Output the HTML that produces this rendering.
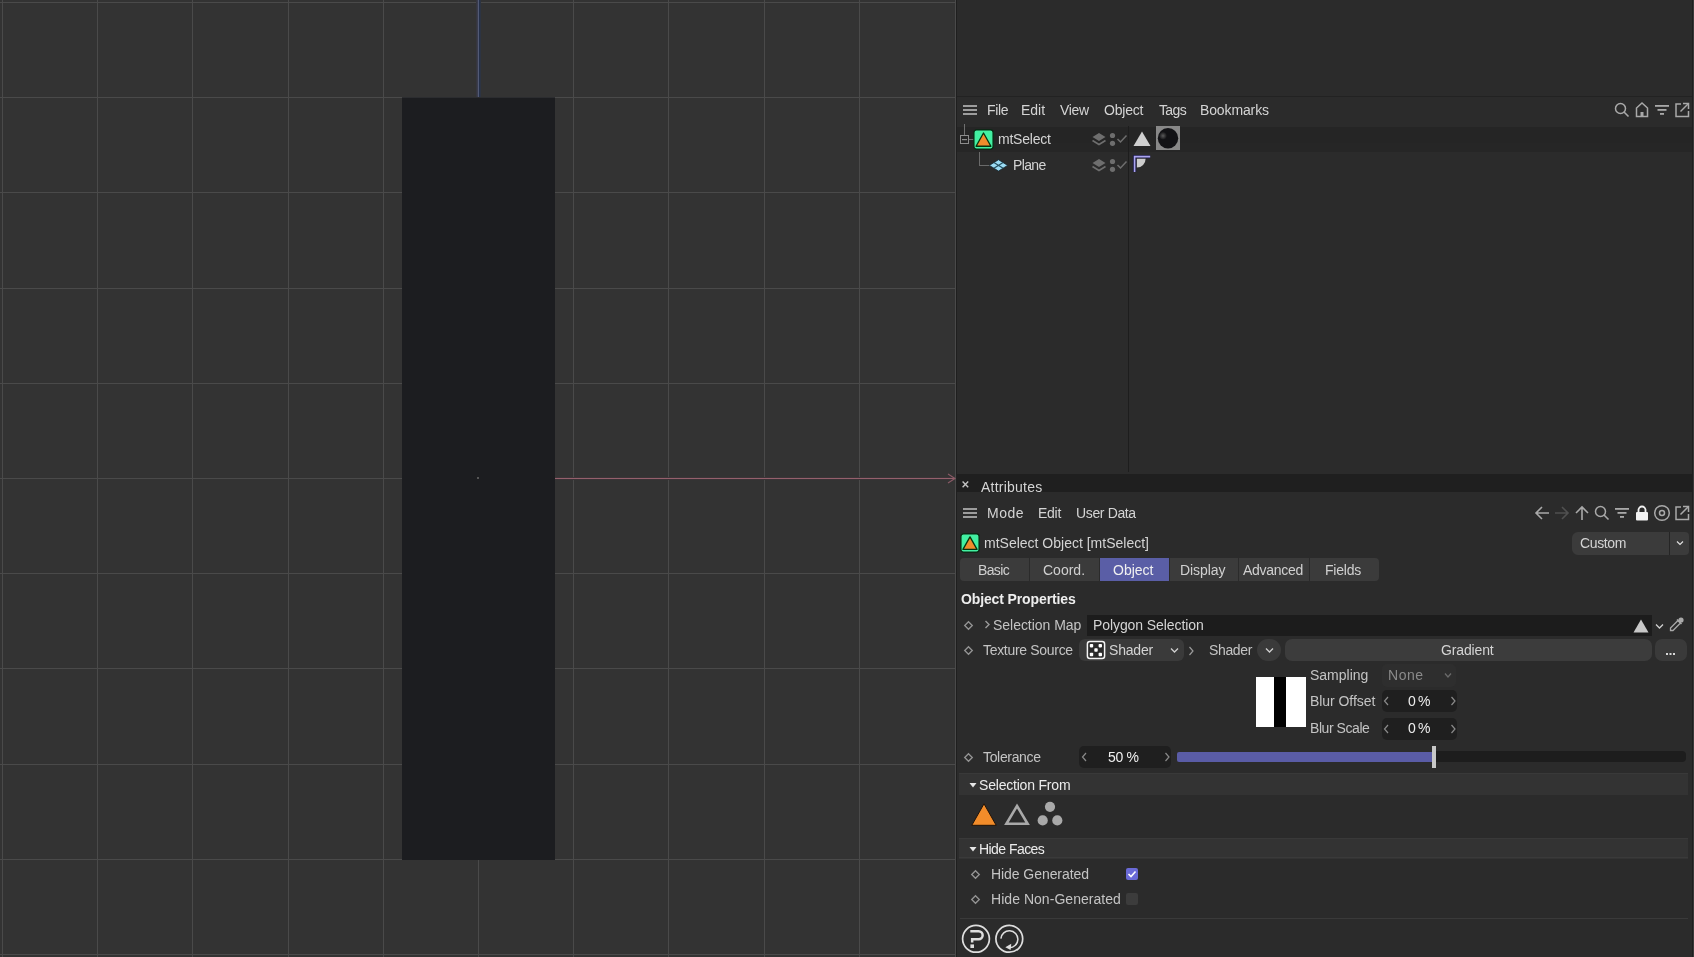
<!DOCTYPE html>
<html><head><meta charset="utf-8"><style>
html,body{margin:0;padding:0;width:1694px;height:957px;overflow:hidden;background:#2b2b2b;}
body{position:relative;font-family:"Liberation Sans",sans-serif;}
.t{position:absolute;white-space:nowrap;will-change:transform;}
svg{overflow:visible;}
</style></head><body>
<div style="position:absolute;left:0px;top:0px;width:956px;height:957px;background:#333333;"></div>
<div style="position:absolute;left:2px;top:0px;width:1px;height:957px;background:#4a4a4a;"></div>
<div style="position:absolute;left:97px;top:0px;width:1px;height:957px;background:#4a4a4a;"></div>
<div style="position:absolute;left:192px;top:0px;width:1px;height:957px;background:#4a4a4a;"></div>
<div style="position:absolute;left:288px;top:0px;width:1px;height:957px;background:#4a4a4a;"></div>
<div style="position:absolute;left:383px;top:0px;width:1px;height:957px;background:#4a4a4a;"></div>
<div style="position:absolute;left:478px;top:0px;width:1px;height:957px;background:#4a4a4a;"></div>
<div style="position:absolute;left:573px;top:0px;width:1px;height:957px;background:#4a4a4a;"></div>
<div style="position:absolute;left:668px;top:0px;width:1px;height:957px;background:#4a4a4a;"></div>
<div style="position:absolute;left:764px;top:0px;width:1px;height:957px;background:#4a4a4a;"></div>
<div style="position:absolute;left:859px;top:0px;width:1px;height:957px;background:#4a4a4a;"></div>
<div style="position:absolute;left:955px;top:0px;width:1px;height:957px;background:#4a4a4a;"></div>
<div style="position:absolute;left:0px;top:2px;width:956px;height:1px;background:#4a4a4a;"></div>
<div style="position:absolute;left:0px;top:97px;width:956px;height:1px;background:#4a4a4a;"></div>
<div style="position:absolute;left:0px;top:192px;width:956px;height:1px;background:#4a4a4a;"></div>
<div style="position:absolute;left:0px;top:288px;width:956px;height:1px;background:#4a4a4a;"></div>
<div style="position:absolute;left:0px;top:383px;width:956px;height:1px;background:#4a4a4a;"></div>
<div style="position:absolute;left:0px;top:478px;width:956px;height:1px;background:#4a4a4a;"></div>
<div style="position:absolute;left:0px;top:573px;width:956px;height:1px;background:#4a4a4a;"></div>
<div style="position:absolute;left:0px;top:668px;width:956px;height:1px;background:#4a4a4a;"></div>
<div style="position:absolute;left:0px;top:764px;width:956px;height:1px;background:#4a4a4a;"></div>
<div style="position:absolute;left:0px;top:859px;width:956px;height:1px;background:#4a4a4a;"></div>
<div style="position:absolute;left:0px;top:954px;width:956px;height:1px;background:#4a4a4a;"></div>
<div style="position:absolute;left:476px;top:0px;width:1px;height:97px;background:#36363f;"></div>
<div style="position:absolute;left:477px;top:0px;width:1px;height:97px;background:#3a3c4c;"></div>
<div style="position:absolute;left:478px;top:0px;width:1px;height:97px;background:#525a76;"></div>
<div style="position:absolute;left:479px;top:0px;width:1px;height:97px;background:#25304a;"></div>
<div style="position:absolute;left:480px;top:0px;width:1px;height:97px;background:#2d3442;"></div>
<div style="position:absolute;left:402px;top:98px;width:153px;height:762px;background:#1c1d20;"></div>
<div style="position:absolute;left:402px;top:97px;width:153px;height:1px;background:#2c2d30;"></div>
<div style="position:absolute;left:555px;top:478px;width:400px;height:1px;background:#94606c;"></div>
<div style="position:absolute;left:555px;top:477px;width:400px;height:1px;background:#3c3538;"></div>
<div style="position:absolute;left:555px;top:479px;width:400px;height:1px;background:#3a3336;"></div>
<svg style="position:absolute;left:944px;top:471px;" width="12" height="15" viewBox="0 0 12 15"><path d="M4 3 L11 7.5 L4 12" fill="none" stroke="#8a5a66" stroke-width="1.1"/></svg>
<div style="position:absolute;left:477px;top:477px;width:2px;height:2px;background:#555;"></div>
<div style="position:absolute;left:956px;top:0px;width:738px;height:957px;background:#2b2b2b;"></div>
<div style="position:absolute;left:956px;top:0px;width:1px;height:957px;background:#1f1f1f;"></div>
<div style="position:absolute;left:1692px;top:0px;width:1px;height:957px;background:#1f1f1f;"></div>
<div style="position:absolute;left:1693px;top:0px;width:1px;height:957px;background:#3a3a3a;"></div>
<div style="position:absolute;left:957px;top:96px;width:735px;height:1px;background:#222222;"></div>
<div style="position:absolute;left:963px;top:105px;width:14px;height:2px;background:#9c9c9c;"></div>
<div style="position:absolute;left:963px;top:109px;width:14px;height:2px;background:#9c9c9c;"></div>
<div style="position:absolute;left:963px;top:113px;width:14px;height:2px;background:#9c9c9c;"></div>
<div class="t" style="left:986.60px;top:100px;font-size:14px;line-height:20px;letter-spacing:-0.3px;color:#d4d4d4;font-weight:normal;">File</div>
<div class="t" style="left:1021.00px;top:100px;font-size:14px;line-height:20px;letter-spacing:0.0px;color:#d4d4d4;font-weight:normal;">Edit</div>
<div class="t" style="left:1059.50px;top:100px;font-size:14px;line-height:20px;letter-spacing:-0.333px;color:#d4d4d4;font-weight:normal;">View</div>
<div class="t" style="left:1104.00px;top:100px;font-size:14px;line-height:20px;letter-spacing:-0.2px;color:#d4d4d4;font-weight:normal;">Object</div>
<div class="t" style="left:1159.00px;top:100px;font-size:14px;line-height:20px;letter-spacing:-0.633px;color:#d4d4d4;font-weight:normal;">Tags</div>
<div class="t" style="left:1200.00px;top:100px;font-size:14px;line-height:20px;letter-spacing:-0.125px;color:#d4d4d4;font-weight:normal;">Bookmarks</div>
<svg style="position:absolute;left:1614px;top:102px;" width="16" height="16" viewBox="0 0 16 16"><circle cx="6.5" cy="6.5" r="5" fill="none" stroke="#a9a9a9" stroke-width="1.5"/><path d="M10 10 L14.5 14.5" stroke="#a9a9a9" stroke-width="1.6"/></svg>
<svg style="position:absolute;left:1635px;top:102px;" width="15" height="16" viewBox="0 0 15 16"><path d="M1.5 14.5 V6 L7 1 L12.5 6 V14.5 Z" fill="none" stroke="#a9a9a9" stroke-width="1.5"/><rect x="5.5" y="10" width="3" height="4.5" fill="#a9a9a9"/></svg>
<svg style="position:absolute;left:1655px;top:104px;" width="15" height="12" viewBox="0 0 15 12"><rect x="0" y="1" width="14" height="1.8" fill="#a9a9a9"/><rect x="2.5" y="5" width="9" height="1.8" fill="#a9a9a9"/><rect x="5" y="9" width="4" height="1.8" fill="#a9a9a9"/></svg>
<svg style="position:absolute;left:1674px;top:102px;" width="16" height="16" viewBox="0 0 16 16"><path d="M7 2 H2 V14.5 H14.5 V9" fill="none" stroke="#a9a9a9" stroke-width="1.5"/><path d="M9 1.5 H14.5 V7" fill="none" stroke="#a9a9a9" stroke-width="1.5"/><path d="M14 2 L6.5 9.5" stroke="#a9a9a9" stroke-width="1.5"/></svg>
<div style="position:absolute;left:957px;top:127px;width:735px;height:16px;background:#252525;"></div>
<div style="position:absolute;left:957px;top:143px;width:735px;height:9px;background:#262626;"></div>
<div style="position:absolute;left:964px;top:124px;width:1px;height:11px;background:#707070;"></div>
<svg style="position:absolute;left:959px;top:134px;" width="12" height="12" viewBox="0 0 12 12"><rect x="1.5" y="1.5" width="8" height="8" fill="none" stroke="#8c8c8c" stroke-width="1"/><rect x="3" y="5" width="5" height="1.2" fill="#8c8c8c"/></svg>
<div style="position:absolute;left:969px;top:139px;width:5px;height:1px;background:#707070;"></div>
<div style="position:absolute;left:979px;top:152px;width:1px;height:14px;background:#6a6a6a;"></div>
<div style="position:absolute;left:980px;top:165px;width:10px;height:1px;background:#6a6a6a;"></div>
<svg style="position:absolute;left:973px;top:129px;" width="21" height="21" viewBox="0 0 21 21"><rect x="0.9" y="0.9" width="19.2" height="19.2" rx="2.5" fill="#42f0a2" stroke="#062a12" stroke-width="1.3"/><path d="M10.50 4.04 L17.91 17.25 L3.09 17.25 Z" fill="#f08c2c" stroke="#07320f" stroke-width="1.3" stroke-linejoin="round"/></svg>
<div class="t" style="left:997.50px;top:129px;font-size:14px;line-height:20px;letter-spacing:-0.214px;color:#d4d4d4;font-weight:normal;">mtSelect</div>
<svg style="position:absolute;left:988px;top:158px;" width="22" height="15" viewBox="0 0 22 15"><path d="M10.5 1.7 L19.6 7.4 L10.5 13.1 L1.4 7.4 Z" fill="#9cdcf4" stroke="#152a34" stroke-width="0.8"/><path d="M5.95 4.55 L15.05 10.25 M15.05 4.55 L5.95 10.25" stroke="#245060" stroke-width="1.2"/></svg>
<div class="t" style="left:1013.00px;top:155px;font-size:14px;line-height:20px;letter-spacing:-0.625px;color:#d4d4d4;font-weight:normal;">Plane</div>
<svg style="position:absolute;left:1091px;top:132px;" width="16" height="15" viewBox="0 0 16 15"><path d="M8 1 L14.5 5 L8 9 L1.5 5 Z" fill="#6e6e6e"/><path d="M1.5 8.5 L8 12.5 L14.5 8.5" fill="none" stroke="#6e6e6e" stroke-width="1.6"/></svg>
<svg style="position:absolute;left:1109px;top:132px;" width="8" height="15" viewBox="0 0 8 15"><circle cx="3.5" cy="3.5" r="2.6" fill="#6e6e6e"/><circle cx="3.5" cy="11.3" r="2.6" fill="#6e6e6e"/></svg>
<svg style="position:absolute;left:1116px;top:134px;" width="12" height="10" viewBox="0 0 12 10"><path d="M1.5 5 L4.5 8 L10.5 1.5" fill="none" stroke="#6e6e6e" stroke-width="1.5"/></svg>
<svg style="position:absolute;left:1091px;top:158px;" width="16" height="15" viewBox="0 0 16 15"><path d="M8 1 L14.5 5 L8 9 L1.5 5 Z" fill="#6e6e6e"/><path d="M1.5 8.5 L8 12.5 L14.5 8.5" fill="none" stroke="#6e6e6e" stroke-width="1.6"/></svg>
<svg style="position:absolute;left:1109px;top:158px;" width="8" height="15" viewBox="0 0 8 15"><circle cx="3.5" cy="3.5" r="2.6" fill="#6e6e6e"/><circle cx="3.5" cy="11.3" r="2.6" fill="#6e6e6e"/></svg>
<svg style="position:absolute;left:1116px;top:160px;" width="12" height="10" viewBox="0 0 12 10"><path d="M1.5 5 L4.5 8 L10.5 1.5" fill="none" stroke="#6e6e6e" stroke-width="1.5"/></svg>
<div style="position:absolute;left:1128px;top:126px;width:1px;height:346px;background:#1d1d1d;"></div>
<svg style="position:absolute;left:1132px;top:130px;" width="20" height="17" viewBox="0 0 20 17"><path d="M10 1.5 L18.5 16 L1.5 16 Z" fill="#cfcfcf"/></svg>
<svg style="position:absolute;left:1156px;top:126px;" width="24" height="24" viewBox="0 0 24 24"><defs><radialGradient id="hl" cx="0.5" cy="0.5" r="0.5"><stop offset="0" stop-color="#5a5a5a"/><stop offset="1" stop-color="#5a5a5a" stop-opacity="0"/></radialGradient></defs><rect x="0" y="0" width="24" height="24" fill="#888888"/><circle cx="12" cy="12.2" r="10.2" fill="#121215"/><circle cx="7" cy="9.8" r="4" fill="url(#hl)"/></svg>
<svg style="position:absolute;left:1132px;top:154px;" width="20" height="20" viewBox="0 0 20 20"><path d="M2.6 18 V2.6 H18.2" fill="none" stroke="#1c1a48" stroke-width="3.4"/><path d="M2.6 18 V2.6 H18.2" fill="none" stroke="#aca6ee" stroke-width="1.6"/><path d="M4.9 4.8 H13.6 A8.7 8.7 0 0 1 4.9 13.6 Z" fill="#cdcdcd"/></svg>
<div style="position:absolute;left:957px;top:474px;width:735px;height:18px;background:#1f1f1f;"></div>
<svg style="position:absolute;left:961px;top:480px;" width="9" height="9" viewBox="0 0 9 9"><path d="M1.6 1.6 L7.2 7.2 M7.2 1.6 L1.6 7.2" stroke="#c4c4c4" stroke-width="1.4"/></svg>
<div class="t" style="left:981.00px;top:477px;font-size:14px;line-height:20px;letter-spacing:0.222px;color:#d4d4d4;font-weight:normal;">Attributes</div>
<div style="position:absolute;left:963px;top:508px;width:14px;height:2px;background:#9c9c9c;"></div>
<div style="position:absolute;left:963px;top:512px;width:14px;height:2px;background:#9c9c9c;"></div>
<div style="position:absolute;left:963px;top:516px;width:14px;height:2px;background:#9c9c9c;"></div>
<div class="t" style="left:986.50px;top:503px;font-size:14px;line-height:20px;letter-spacing:0.5px;color:#d4d4d4;font-weight:normal;">Mode</div>
<div class="t" style="left:1037.80px;top:503px;font-size:14px;line-height:20px;letter-spacing:-0.267px;color:#d4d4d4;font-weight:normal;">Edit</div>
<div class="t" style="left:1075.80px;top:503px;font-size:14px;line-height:20px;letter-spacing:-0.362px;color:#d4d4d4;font-weight:normal;">User Data</div>
<svg style="position:absolute;left:1534px;top:505px;" width="17" height="16" viewBox="0 0 17 16"><path d="M15 8 H2 M8 2 L2 8 L8 14" fill="none" stroke="#a9a9a9" stroke-width="1.6"/></svg>
<svg style="position:absolute;left:1554px;top:505px;" width="17" height="16" viewBox="0 0 17 16"><path d="M1 8 H14 M8 2 L14 8 L8 14" fill="none" stroke="#505050" stroke-width="1.6"/></svg>
<svg style="position:absolute;left:1574px;top:505px;" width="16" height="16" viewBox="0 0 16 16"><path d="M8 15 V2 M2 8 L8 2 L14 8" fill="none" stroke="#a9a9a9" stroke-width="1.6"/></svg>
<svg style="position:absolute;left:1594px;top:505px;" width="16" height="16" viewBox="0 0 16 16"><circle cx="6.5" cy="6.5" r="5" fill="none" stroke="#a9a9a9" stroke-width="1.5"/><path d="M10 10 L14.5 14.5" stroke="#a9a9a9" stroke-width="1.6"/></svg>
<svg style="position:absolute;left:1615px;top:507px;" width="15" height="12" viewBox="0 0 15 12"><rect x="0" y="1" width="14" height="1.8" fill="#a9a9a9"/><rect x="2.5" y="5" width="9" height="1.8" fill="#a9a9a9"/><rect x="5" y="9" width="4" height="1.8" fill="#a9a9a9"/></svg>
<svg style="position:absolute;left:1635px;top:505px;" width="14" height="16" viewBox="0 0 14 16"><path d="M3.5 7 V5 A3.5 3.5 0 0 1 10.5 5 V7" fill="none" stroke="#f2f2f2" stroke-width="1.8"/><rect x="1" y="7" width="12" height="8.5" rx="1" fill="#f2f2f2"/></svg>
<svg style="position:absolute;left:1653px;top:504px;" width="18" height="18" viewBox="0 0 18 18"><circle cx="9" cy="9" r="7.3" fill="none" stroke="#a9a9a9" stroke-width="1.5"/><circle cx="9" cy="9" r="2.5" fill="none" stroke="#a9a9a9" stroke-width="1.5"/></svg>
<svg style="position:absolute;left:1674px;top:505px;" width="16" height="16" viewBox="0 0 16 16"><path d="M7 2 H2 V14.5 H14.5 V9" fill="none" stroke="#a9a9a9" stroke-width="1.5"/><path d="M9 1.5 H14.5 V7" fill="none" stroke="#a9a9a9" stroke-width="1.5"/><path d="M14 2 L6.5 9.5" stroke="#a9a9a9" stroke-width="1.5"/></svg>
<svg style="position:absolute;left:960px;top:533px;" width="20" height="20" viewBox="0 0 20 20"><rect x="0.9" y="0.9" width="18.2" height="18.2" rx="2.5" fill="#42f0a2" stroke="#062a12" stroke-width="1.3"/><path d="M10.00 3.88 L17.02 16.39 L2.98 16.39 Z" fill="#f08c2c" stroke="#07320f" stroke-width="1.3" stroke-linejoin="round"/></svg>
<div class="t" style="left:984.40px;top:533px;font-size:14px;line-height:20px;letter-spacing:0.0px;color:#d4d4d4;font-weight:normal;">mtSelect Object [mtSelect]</div>
<div style="position:absolute;left:1572px;top:532px;width:117px;height:23px;background:#3b3b3b;border-radius:6px 4px 4px 6px;"></div>
<div style="position:absolute;left:1669px;top:532px;width:1px;height:23px;background:#252525;"></div>
<div class="t" style="left:1579.50px;top:533px;font-size:14px;line-height:20px;letter-spacing:-0.36px;color:#d4d4d4;font-weight:normal;">Custom</div>
<svg style="position:absolute;left:1675px;top:539px;" width="10" height="8" viewBox="0 0 10 8"><path d="M2 2.5 L5 5.5 L8 2.5" fill="none" stroke="#e0e0e0" stroke-width="1.2"/></svg>
<div style="position:absolute;left:960px;top:558px;width:69px;height:23px;background:#3b3b3b;border-radius:4px 0 0 4px;"></div>
<div class="t" style="left:977.50px;top:560px;font-size:14px;line-height:20px;letter-spacing:-0.625px;color:#d0d0d0;font-weight:normal;">Basic</div>
<div style="position:absolute;left:1030px;top:558px;width:69px;height:23px;background:#3b3b3b;"></div>
<div class="t" style="left:1043.00px;top:560px;font-size:14px;line-height:20px;letter-spacing:0.0px;color:#d0d0d0;font-weight:normal;">Coord.</div>
<div style="position:absolute;left:1100px;top:558px;width:69px;height:23px;background:#5a5ea6;"></div>
<div class="t" style="left:1113.00px;top:560px;font-size:14px;line-height:20px;letter-spacing:0.0px;color:#f0f0f0;font-weight:normal;">Object</div>
<div style="position:absolute;left:1170px;top:558px;width:68px;height:23px;background:#3b3b3b;"></div>
<div class="t" style="left:1180.00px;top:560px;font-size:14px;line-height:20px;letter-spacing:-0.083px;color:#d0d0d0;font-weight:normal;">Display</div>
<div style="position:absolute;left:1239px;top:558px;width:70px;height:23px;background:#3b3b3b;"></div>
<div class="t" style="left:1243.00px;top:560px;font-size:14px;line-height:20px;letter-spacing:-0.286px;color:#d0d0d0;font-weight:normal;">Advanced</div>
<div style="position:absolute;left:1310px;top:558px;width:69px;height:23px;background:#3b3b3b;border-radius:0 4px 4px 0;"></div>
<div class="t" style="left:1325.00px;top:560px;font-size:14px;line-height:20px;letter-spacing:-0.2px;color:#d0d0d0;font-weight:normal;">Fields</div>
<div class="t" style="left:961.00px;top:589px;font-size:14px;line-height:20px;letter-spacing:-0.125px;color:#eeeeee;font-weight:bold;">Object Properties</div>
<svg style="position:absolute;left:962.5px;top:619.5px;" width="11" height="11" viewBox="0 0 11 11"><path d="M5.5 1.7 L9.3 5.5 L5.5 9.3 L1.7 5.5 Z" fill="none" stroke="#959595" stroke-width="1.3"/></svg>
<svg style="position:absolute;left:984px;top:620px;" width="7" height="9" viewBox="0 0 7 9"><path d="M1.5 1 L5 4.5 L1.5 8" fill="none" stroke="#9a9a9a" stroke-width="1.4"/></svg>
<div class="t" style="left:993.00px;top:615px;font-size:14px;line-height:20px;letter-spacing:-0.033px;color:#c4c4c4;font-weight:normal;">Selection Map</div>
<div style="position:absolute;left:1087px;top:615px;width:565px;height:21px;background:#1c1c1c;"></div>
<div class="t" style="left:1093.00px;top:615px;font-size:14px;line-height:20px;letter-spacing:-0.081px;color:#d4d4d4;font-weight:normal;">Polygon Selection</div>
<svg style="position:absolute;left:1632px;top:618px;" width="18" height="16" viewBox="0 0 18 16"><path d="M9 1.5 L16.5 14.5 L1.5 14.5 Z" fill="#c8c8c8"/></svg>
<svg style="position:absolute;left:1655px;top:623px;" width="9" height="7" viewBox="0 0 9 7"><path d="M1 1.5 L4.5 5 L8 1.5" fill="none" stroke="#cfcfcf" stroke-width="1.3"/></svg>
<svg style="position:absolute;left:1668px;top:616px;" width="17" height="17" viewBox="0 0 17 17"><path d="M2.5 14.5 L2.5 12 L10 4.5 L12.5 7 L5 14.5 Z" fill="none" stroke="#a9a9a9" stroke-width="1.3"/><path d="M9 3.5 L13.5 8" stroke="#a9a9a9" stroke-width="1.5"/><circle cx="13" cy="4" r="2.6" fill="#a9a9a9"/></svg>
<svg style="position:absolute;left:962.5px;top:644.7px;" width="11" height="11" viewBox="0 0 11 11"><path d="M5.5 1.7 L9.3 5.5 L5.5 9.3 L1.7 5.5 Z" fill="none" stroke="#959595" stroke-width="1.3"/></svg>
<div class="t" style="left:983.00px;top:640px;font-size:14px;line-height:20px;letter-spacing:-0.308px;color:#c4c4c4;font-weight:normal;">Texture Source</div>
<div style="position:absolute;left:1079px;top:639px;width:105px;height:22px;background:#3a3a3a;border-radius:6px;"></div>
<svg style="position:absolute;left:1086px;top:640px;" width="20" height="20" viewBox="0 0 20 20"><rect x="1.4" y="1.4" width="17.2" height="17.2" rx="2.5" fill="#2a2a2a" stroke="#f4f4f4" stroke-width="1.5"/><rect x="3.8" y="4.0" width="3.4" height="3.4" rx="0.8" fill="#fff"/><rect x="12.6" y="4.0" width="3.4" height="3.4" rx="0.8" fill="#fff"/><rect x="8.3" y="8.3" width="3.4" height="3.4" rx="0.8" fill="#fff"/><rect x="3.8" y="12.8" width="3.4" height="3.4" rx="0.8" fill="#fff"/><rect x="12.6" y="12.8" width="3.4" height="3.4" rx="0.8" fill="#fff"/></svg>
<div class="t" style="left:1109.00px;top:640px;font-size:14px;line-height:20px;letter-spacing:-0.2px;color:#d4d4d4;font-weight:normal;">Shader</div>
<svg style="position:absolute;left:1170px;top:647px;" width="9" height="7" viewBox="0 0 9 7"><path d="M1 1.5 L4.5 5 L8 1.5" fill="none" stroke="#cfcfcf" stroke-width="1.3"/></svg>
<svg style="position:absolute;left:1187.5px;top:645.5px;" width="7" height="10" viewBox="0 0 7 10"><path d="M1.5 1 L5 5.0 L1.5 9" fill="none" stroke="#9a9a9a" stroke-width="1.2"/></svg>
<div class="t" style="left:1208.60px;top:640px;font-size:14px;line-height:20px;letter-spacing:-0.36px;color:#c4c4c4;font-weight:normal;">Shader</div>
<div style="position:absolute;left:1257px;top:639px;width:24px;height:22px;background:#3a3a3a;border-radius:12px;"></div>
<svg style="position:absolute;left:1264.5px;top:647px;" width="9" height="7" viewBox="0 0 9 7"><path d="M1 1.5 L4.5 5 L8 1.5" fill="none" stroke="#cfcfcf" stroke-width="1.3"/></svg>
<div style="position:absolute;left:1285px;top:639px;width:367px;height:22px;background:#3c3c3c;border-radius:7px;"></div>
<div class="t" style="left:1441.00px;top:640px;font-size:14px;line-height:20px;letter-spacing:-0.143px;color:#d4d4d4;font-weight:normal;">Gradient</div>
<div style="position:absolute;left:1655px;top:639px;width:32px;height:22px;background:#3a3a3a;border-radius:7px;"></div>
<svg style="position:absolute;left:1664px;top:651px;" width="14" height="5" viewBox="0 0 14 5"><rect x="2" y="2" width="2" height="2" fill="#d8d8d8"/><rect x="5.5" y="2" width="2" height="2" fill="#d8d8d8"/><rect x="9" y="2" width="2" height="2" fill="#d8d8d8"/></svg>
<div style="position:absolute;left:1256px;top:677px;width:50px;height:50px;background:#ffffff;"></div>
<div style="position:absolute;left:1274px;top:677px;width:12px;height:50px;background:#000000;"></div>
<div class="t" style="left:1309.60px;top:665px;font-size:14px;line-height:20px;letter-spacing:0.0px;color:#c4c4c4;font-weight:normal;">Sampling</div>
<div style="position:absolute;left:1382px;top:664px;width:74px;height:23px;background:#2e2e2e;border-radius:5px;"></div>
<div class="t" style="left:1388.00px;top:665px;font-size:14px;line-height:20px;letter-spacing:0.533px;color:#8a8a8a;font-weight:normal;">None</div>
<svg style="position:absolute;left:1444px;top:672px;" width="8" height="7" viewBox="0 0 8 7"><path d="M1 1.5 L4.0 5 L7 1.5" fill="none" stroke="#6a6a6a" stroke-width="1.3"/></svg>
<div class="t" style="left:1309.60px;top:691px;font-size:14px;line-height:20px;letter-spacing:-0.06px;color:#c4c4c4;font-weight:normal;">Blur Offset</div>
<div style="position:absolute;left:1382px;top:690px;width:75px;height:22px;background:#1f1f1f;border-radius:5px;"></div>
<svg style="position:absolute;left:1382.5px;top:696px;" width="7" height="10" viewBox="0 0 7 10"><path d="M5 1 L1.5 5.0 L5 9" fill="none" stroke="#8a8a8a" stroke-width="1.2"/></svg>
<div class="t" style="left:1408.40px;top:691px;font-size:14px;line-height:20px;letter-spacing:-0.8px;color:#eeeeee;font-weight:normal;">0 %</div>
<svg style="position:absolute;left:1449.5px;top:696px;" width="7" height="10" viewBox="0 0 7 10"><path d="M1.5 1 L5 5.0 L1.5 9" fill="none" stroke="#8a8a8a" stroke-width="1.2"/></svg>
<div class="t" style="left:1309.60px;top:718px;font-size:14px;line-height:20px;letter-spacing:-0.433px;color:#c4c4c4;font-weight:normal;">Blur Scale</div>
<div style="position:absolute;left:1382px;top:718px;width:75px;height:22px;background:#1f1f1f;border-radius:5px;"></div>
<svg style="position:absolute;left:1382.5px;top:724px;" width="7" height="10" viewBox="0 0 7 10"><path d="M5 1 L1.5 5.0 L5 9" fill="none" stroke="#8a8a8a" stroke-width="1.2"/></svg>
<div class="t" style="left:1408.40px;top:718px;font-size:14px;line-height:20px;letter-spacing:-0.8px;color:#eeeeee;font-weight:normal;">0 %</div>
<svg style="position:absolute;left:1449.5px;top:724px;" width="7" height="10" viewBox="0 0 7 10"><path d="M1.5 1 L5 5.0 L1.5 9" fill="none" stroke="#8a8a8a" stroke-width="1.2"/></svg>
<svg style="position:absolute;left:962.5px;top:751.7px;" width="11" height="11" viewBox="0 0 11 11"><path d="M5.5 1.7 L9.3 5.5 L5.5 9.3 L1.7 5.5 Z" fill="none" stroke="#959595" stroke-width="1.3"/></svg>
<div class="t" style="left:983.40px;top:747px;font-size:14px;line-height:20px;letter-spacing:-0.337px;color:#c4c4c4;font-weight:normal;">Tolerance</div>
<div style="position:absolute;left:1079px;top:746px;width:92px;height:22px;background:#1f1f1f;border-radius:5px;"></div>
<svg style="position:absolute;left:1080.5px;top:752px;" width="7" height="10" viewBox="0 0 7 10"><path d="M5 1 L1.5 5.0 L5 9" fill="none" stroke="#8a8a8a" stroke-width="1.2"/></svg>
<div class="t" style="left:1108.00px;top:747px;font-size:14px;line-height:20px;letter-spacing:-0.333px;color:#f0f0f0;font-weight:normal;">50 %</div>
<svg style="position:absolute;left:1163.5px;top:752px;" width="7" height="10" viewBox="0 0 7 10"><path d="M1.5 1 L5 5.0 L1.5 9" fill="none" stroke="#8a8a8a" stroke-width="1.2"/></svg>
<div style="position:absolute;left:1435px;top:751px;width:251px;height:11px;background:#1d1d1d;border-radius:0 4px 4px 0;"></div>
<div style="position:absolute;left:1177px;top:752px;width:256px;height:10px;background:#5a5ca6;border-radius:2px 0 0 2px;"></div>
<div style="position:absolute;left:1432px;top:746px;width:4px;height:22px;background:#c8c8c8;"></div>
<div style="position:absolute;left:959px;top:773px;width:729px;height:22px;background:#333333;"></div>
<div style="position:absolute;left:959px;top:773px;width:729px;height:1px;background:#393939;"></div>
<svg style="position:absolute;left:968px;top:782px;" width="10" height="7" viewBox="0 0 10 7"><path d="M1.5 1 L8.5 1 L5 5.5 Z" fill="#e6e6e6"/></svg>
<div class="t" style="left:978.60px;top:775px;font-size:14px;line-height:20px;letter-spacing:-0.2px;color:#ececec;font-weight:normal;">Selection From</div>
<svg style="position:absolute;left:971px;top:802px;" width="27" height="25" viewBox="0 0 27 25"><path d="M13 1.8 L25.2 23.3 L0.8 23.3 Z" fill="#f28c2a" stroke="#1e1208" stroke-width="1"/></svg>
<svg style="position:absolute;left:1004px;top:802px;" width="27" height="25" viewBox="0 0 27 25"><path d="M13 4 L23.6 21.8 L2.4 21.8 Z" fill="none" stroke="#a9a9a9" stroke-width="2.6"/></svg>
<svg style="position:absolute;left:1036px;top:801px;" width="28" height="27" viewBox="0 0 28 27"><circle cx="14" cy="5.8" r="5.1" fill="#a9a9a9"/><circle cx="6.7" cy="19.4" r="5.1" fill="#a9a9a9"/><circle cx="21.3" cy="19.4" r="5.1" fill="#a9a9a9"/></svg>
<div style="position:absolute;left:959px;top:838px;width:729px;height:21px;background:#333333;"></div>
<div style="position:absolute;left:959px;top:838px;width:729px;height:1px;background:#393939;"></div>
<div style="position:absolute;left:959px;top:857px;width:729px;height:1px;background:#3a3a3a;"></div>
<svg style="position:absolute;left:968px;top:846px;" width="10" height="7" viewBox="0 0 10 7"><path d="M1.5 1 L8.5 1 L5 5.5 Z" fill="#e6e6e6"/></svg>
<div class="t" style="left:978.60px;top:839px;font-size:14px;line-height:20px;letter-spacing:-0.556px;color:#ececec;font-weight:normal;">Hide Faces</div>
<svg style="position:absolute;left:970.3px;top:869.0px;" width="11" height="11" viewBox="0 0 11 11"><path d="M5.5 1.7 L9.3 5.5 L5.5 9.3 L1.7 5.5 Z" fill="none" stroke="#959595" stroke-width="1.3"/></svg>
<div class="t" style="left:990.50px;top:864px;font-size:14px;line-height:20px;letter-spacing:-0.062px;color:#c4c4c4;font-weight:normal;">Hide Generated</div>
<div style="position:absolute;left:1126px;top:868px;width:12px;height:12px;background:#6a6ad6;border-radius:2px;"></div>
<svg style="position:absolute;left:1126px;top:868px;" width="12" height="12" viewBox="0 0 12 12"><path d="M2.5 6 L5 8.5 L9.5 3.5" fill="none" stroke="#fff" stroke-width="1.6"/></svg>
<svg style="position:absolute;left:970.3px;top:893.7px;" width="11" height="11" viewBox="0 0 11 11"><path d="M5.5 1.7 L9.3 5.5 L5.5 9.3 L1.7 5.5 Z" fill="none" stroke="#959595" stroke-width="1.3"/></svg>
<div class="t" style="left:990.50px;top:889px;font-size:14px;line-height:20px;letter-spacing:0.041px;color:#c4c4c4;font-weight:normal;">Hide Non-Generated</div>
<div style="position:absolute;left:1126px;top:893px;width:12px;height:12px;background:#3c3c3c;border-radius:2px;"></div>
<div style="position:absolute;left:960px;top:918px;width:728px;height:1px;background:#3a3a3a;"></div>
<svg style="position:absolute;left:960px;top:924px;" width="32" height="31" viewBox="0 0 32 31"><circle cx="16" cy="14.8" r="13.4" fill="none" stroke="#dedede" stroke-width="1.7"/><path d="M10.3 7.15 H18.6 A4.05 4.05 0 0 1 18.6 15.25 H12.15 V18.6" fill="none" stroke="#dedede" stroke-width="2.5"/><rect x="10.4" y="20.4" width="3.6" height="3.6" fill="#dedede"/></svg>
<svg style="position:absolute;left:993px;top:924px;" width="32" height="31" viewBox="0 0 32 31"><circle cx="16.3" cy="14.8" r="13.4" fill="none" stroke="#dedede" stroke-width="1.7"/><path d="M7.9 14.6 A8.5 8.5 0 1 1 16.4 23.7" fill="none" stroke="#dedede" stroke-width="1.5"/><path d="M12.3 23.2 L18.3 19.8 L17.6 26 Z" fill="#dedede"/></svg>
</body></html>
